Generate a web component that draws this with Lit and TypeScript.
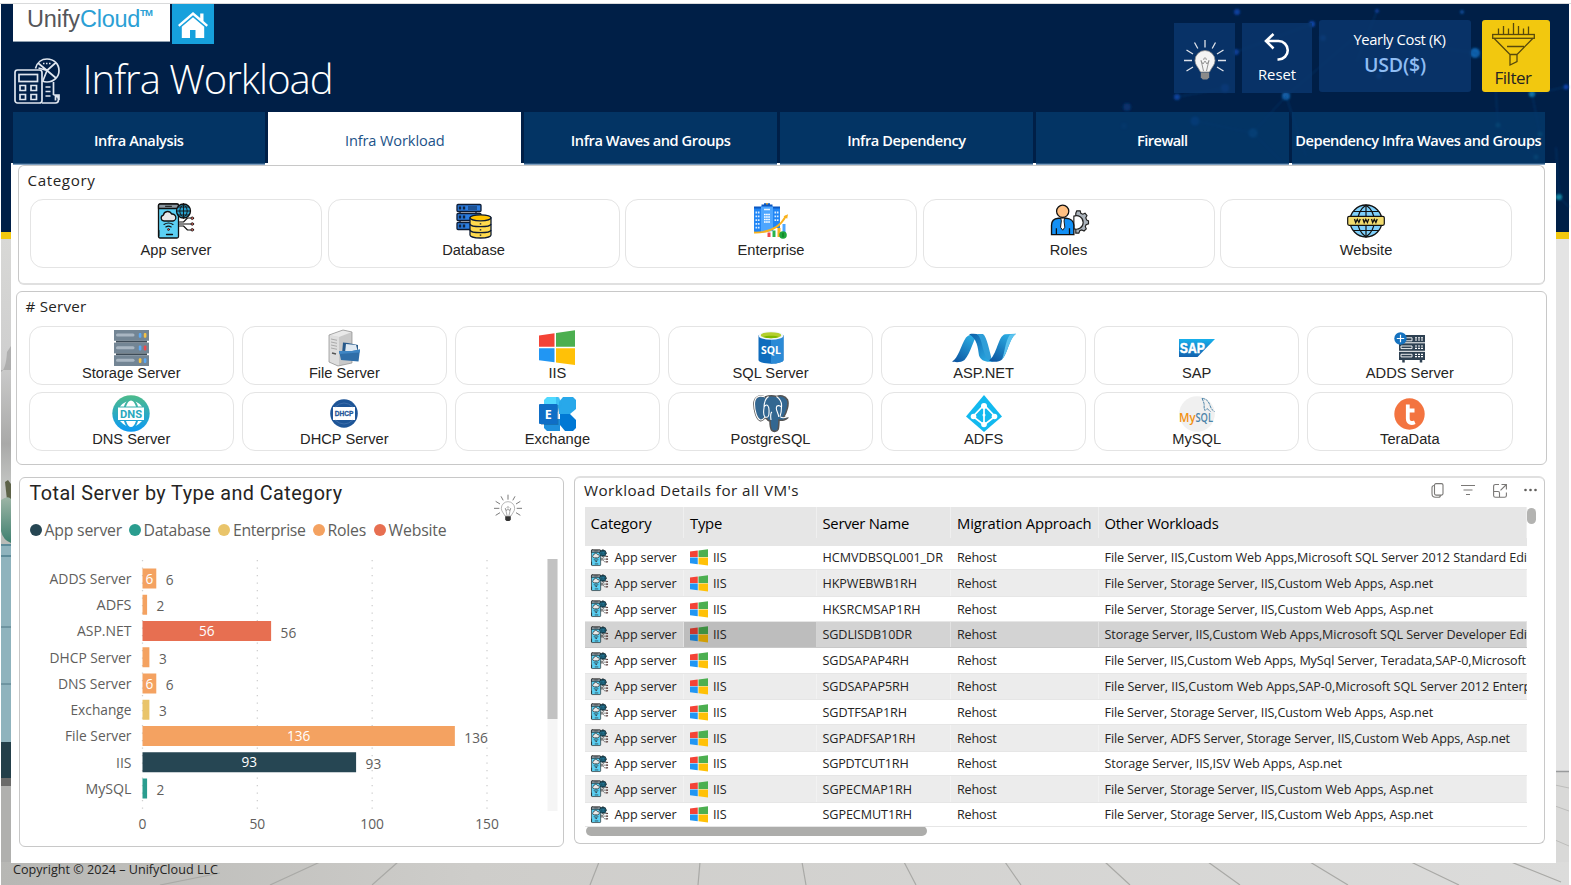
import { LitElement, html, svg, css, nothing } from "lit";
import { customElement, property, query } from "lit/decorators.js";

/* ---------- text run that is tracked to an exact measure ---------- */
@customElement("fit-text")
class FitText extends LitElement {
  @property({ type: Number }) w = 0;
  @property() text = "";
  @query("span") run!: HTMLSpanElement;
  static styles = css`
    :host { display: inline-block; white-space: pre; flex: none; }
  `;
  updated() {
    this.run.style.letterSpacing = "0";
    const natural = this.run.getBoundingClientRect().width;
    this.run.style.letterSpacing = `${(this.w - natural) / this.text.length}px`;
  }
  render() {
    return html`<span>${this.text}</span>`;
  }
}
const fit = (text: string, w: number) => html`<fit-text .text=${text} .w=${w}></fit-text>`;

/* ---------- icons ---------- */
const appServer = svg`
  <g stroke="#111" stroke-width="1.3" stroke-linejoin="round" stroke-linecap="round" fill="none">
    <rect x="1" y="1" width="20" height="34" rx="1.5" fill="#5bd0f3"/>
    <path d="M1 5.5V2.5A1.5 1.5 0 0 1 2.500 1h17A1.500 1.500 0 0 1 21 2.500v3z" fill="#8d9aa3"/>
    <path d="M8 3.300h6" stroke-width="1"/>
    <path d="M9 31.500h6M1.300 27.500v5.500" />
    <path d="M6.500 18a3 3 0 0 1-.6-5.900 4.300 4.300 0 0 1 8.200-1 3.500 3.500 0 1 1 1.400 6.900z" fill="#e8e8e8"/>
    <path d="M6.500 21.500q4.500-3 9 0M8.300 24q2.700-1.800 5.400 0" stroke-width="1.100"/>
    <circle cx="11" cy="26.500" r="1" fill="#f04a3c" stroke-width=".7"/>
    <circle cx="26" cy="8" r="7" fill="#2a9fcb"/>
    <path d="M26 1v14M19 8h14M20.500 4h11M20.500 12h11M26 1c-5 4-5 10 0 14M26 1c5 4 5 10 0 14" stroke-width=".9"/>
    <path d="M22 21h13M22 19h4l4-4h4M22 23h4l4 4h4" stroke-width="1.100"/>
    <circle cx="34.800" cy="15.200" r="1.300" fill="#e06a60" stroke-width=".8"/>
    <circle cx="34.800" cy="21" r="1.300" fill="#e06a60" stroke-width=".8"/>
    <circle cx="34.800" cy="26.800" r="1.300" fill="#e06a60" stroke-width=".8"/>
  </g>`;
const windows = svg`
  <path d="M0 5.500 15.500 3.200V16.800H0z" fill="#f44336"/>
  <path d="M17 3 36 .3V16.800H17z" fill="#4caf50"/>
  <path d="M0 18.200H15.500V32.300L0 30.200z" fill="#2196f3"/>
  <path d="M17 18.200H36V35L17 32.500z" fill="#ffc107"/>`;

const categoryIcons: Record<string, unknown> = {
  "App server": html`<svg width="38" height="36" viewBox="0 0 37 36">${appServer}</svg>`,
  Database: html`<svg width="36" height="36" viewBox="0 0 36 36">
    <g stroke="#0d1b33" stroke-width="1.300">
      <path d="M4 8v3M20 8v3M4 17v3" fill="none"/>
      <rect x="1" y="1.500" width="24" height="7" rx="1" fill="#2b7de0"/>
      <rect x="1" y="10.500" width="24" height="7" rx="1" fill="#2b7de0"/>
      <rect x="1" y="19.500" width="24" height="7" rx="1" fill="#2b7de0"/>
      <path d="M4 3.500v3M8 3.500v3M4 12.500v3M8 12.500v3M4 21.500v3M8 21.500v3" stroke-width="2.400" stroke="#10233f"/>
      <path d="M12 4h9M12 6h9" stroke-width=".9"/>
      <path d="M14 15v17c0 1.700 4.700 3 10.500 3S35 33.700 35 32V15z" fill="#ffdb4d"/>
      <ellipse cx="24.500" cy="14.800" rx="10.500" ry="3" fill="#ffc400"/>
      <path d="M14 21c1 3.600 20 3.600 21 0M14 27c1 3.600 20 3.600 21 0" fill="none"/>
      <path d="M24.500 20.300v1.200M24.500 26.300v1.200M24.500 31.500v1.200" stroke-width="1.500"/>
    </g></svg>`,
  Enterprise: html`<svg width="36" height="36" viewBox="0 0 36 36">
    <path d="M1 5h7v25H1zM20 5h7v20h-7z" fill="#2186f5"/><path d="M1 4.500h7M20 4.500h7" stroke="#0b57c2" stroke-width="2"/>
    <path d="M8 3h12v25l-12 1.500z" fill="#4ea6ff"/><path d="M8.500 2.500h11M11 1.200h6" stroke="#0b57c2" stroke-width="2"/><path d="M14 0v1.500" stroke="#f6b01c" stroke-width="1.500"/>
    <path d="M2.500 9.500h4M2.500 13.300h4M2.500 17.100h4M2.500 20.900h4M2.500 24.700h4M21.500 9.500h4M21.500 13.300h4M21.500 17.100h4" stroke="#d9ecff" stroke-width="1.800" stroke-dasharray="1.600 .8"/>
    <path d="M11 6.500h6" stroke="#e6f3ff" stroke-width="1.500"/>
    <path d="M11 11.500h6M11 14h6M11 16.500h6M11 19h6" stroke="#fff" stroke-width="1.700" stroke-dasharray="1.700 .4"/>
    <path d="M1 29.500C17 30 27 24 33 13" fill="none" stroke="#f9b21d" stroke-width="1.800"/><path d="M30.500 13.200l4.500-2-.8 4.600z" fill="#f9b21d"/>
    <path d="M16 29.500v4.500" stroke="#f0484c" stroke-width="3"/><path d="M21 27.500v6.500" stroke="#29b34a" stroke-width="3"/><path d="M26 25v9" stroke="#f9b21d" stroke-width="3"/><path d="M31 21v9" stroke="#4ea6ff" stroke-width="3"/>
    <circle cx="30" cy="32" r="3.800" fill="#1fa63c"/><path d="M30 29.800v4.400" stroke="#0b6b20"/></svg>`,
  Roles: html`<svg width="38" height="33" viewBox="0 0 38 34">
    <path d="M26 9.500l1-2.500h3.500l.7 2.600 2 .9 2.300-1 2 2.400-1.200 2.300.8 2.200 2 1v3l-2.500.9-.8 2 1 2.300-2.300 2.200-2.400-1.100-2 .8-1 2.500H26z" fill="#aab2ba" stroke="#222" stroke-width="1.200"/>
    <path d="M24 12.500a7 7 0 1 1 0 13z" fill="#fff" stroke="#222" stroke-width="1.200"/>
    <path d="M1 31.500V22c0-4.500 3-7 7-7.300h8c4.500.3 8 3 8 7.300v9.500z" fill="#1390f5" stroke="#111" stroke-width="1.400"/>
    <path d="M6 31.500V25M19.500 31.500V25" stroke="#111" stroke-width="1.300"/>
    <path d="M10.500 14.500h4l-.6 3 .8 6.500-2.200 3-2.200-3 .8-6.500z" fill="#fff" stroke="#111" stroke-width="1"/>
    <circle cx="12.500" cy="7.500" r="6.300" fill="#ffc083" stroke="#111" stroke-width="1.300"/></svg>`,
  Website: html`<svg width="38" height="34" viewBox="0 0 38 34">
    <circle cx="19" cy="17" r="16" fill="#7fd0fb" stroke="#111" stroke-width="1.300"/>
    <path d="M19 1v32M6 7.500h26M6 26.500h26M19 1C8 9 8 25 19 33M19 1c11 8 11 24 0 32" fill="none" stroke="#111" stroke-width="1.200"/>
    <rect x=".7" y="12.300" width="36.600" height="9" rx="1.500" fill="#f2dc6f" stroke="#111" stroke-width="1.200"/>
    <path d="M7.500 15l1.200 3.500 1.600-3 1.600 3 1.300-3.500M16 15l1.200 3.500 1.600-3 1.600 3 1.300-3.500M24.500 15l1.200 3.500 1.600-3 1.600 3 1.300-3.500" fill="none" stroke="#111" stroke-width="1.300"/></svg>`,
};

const rack = [0, 1, 2].map(
  (i) => svg`<g transform="translate(0 ${i * 12.600})">
    <rect width="35" height="10.800" fill="#738594"/>${i < 2 ? svg`<rect x="2" y="10.800" width="31" height="1.800" fill="#3d4b57"/>` : nothing}
    <rect x="2" y="3.600" width="18.500" height="3" rx="1.500" fill="#a9b6c2"/>
    <rect x="24.800" y="3" width="2.600" height="4.800" rx="1" fill="${i === 2 ? "#f5c344" : "#5ba9f5"}"/>
    <rect x="29.800" y="3" width="2.600" height="4.800" rx="1" fill="${["#f5c344", "#f0484c", "#5ba9f5"][i]}"/></g>`
);
const serverIcons: Record<string, unknown> = {
  "Storage Server": html`<svg width="35" height="36" viewBox="0 0 35 36">${rack}</svg>`,
  "File Server": html`<svg width="33" height="36" viewBox="0 0 33 36">
    <path d="M1 5 15 0l9 2v31L10 36 1 32z" fill="#c9c9c9"/><path d="M1 5l10 2v29L1 32z" fill="#dedede"/><path d="M1 5 15 0l9 2-13 5z" fill="#e9e9e9"/>
    <path d="M1 5 15 0l9 2v31L10 36 1 32z" fill="none" stroke="#8b8b8b" stroke-width=".7"/>
    <path d="M3 9l6 1.300M3 12l6 1.300M3 15l6 1.300M3 18l6 1.300" stroke="#aaa"/><path d="M4 23l4 1" stroke="#555" stroke-width="1.500"/>
    <path d="M15 12.500l5 .5 10 2v9H14z" fill="#27598a"/><path d="M18 14l10 1 2 7-13 1z" fill="#dfe9f2"/>
    <path d="M11 21h13l8-1.500-1.500 12L13 30z" fill="#2f6ea8"/><path d="M11 21h13l8-1.500-.4 3L11.500 24z" fill="#3f86c4"/></svg>`,
  IIS: html`<svg width="36" height="36" viewBox="0 0 36 36">${windows}</svg>`,
  "SQL Server": html`<svg width="26" height="33" viewBox="0 0 26 33">
    <path d="M.5 4v25c0 2 5.600 3.700 12.500 3.700S25.500 31 25.500 29V4z" fill="#0f6cbd"/><path d="M13 4h12.500v25c0 2-5.600 3.700-12.500 3.700z" fill="#2b8ad6"/>
    <ellipse cx="13" cy="4.500" rx="12.500" ry="4.300" fill="#f2f7fb"/><ellipse cx="13" cy="4.200" rx="10.300" ry="3" fill="#b4cf2d"/><path d="M5 6c3-1.800 13-1.800 16 0-4 1.600-12 1.600-16 0z" fill="#7fb900"/>
    <text x="13" y="22.800" text-anchor="middle" textLength="20" lengthAdjust="spacingAndGlyphs" font-family="Open Sans" font-weight="700" font-size="10.500" fill="#fff">SQL</text></svg>`,
  "ASP.NET": html`<svg width="64" height="30" viewBox="0 0 64 30">
    <defs><linearGradient id="n1" x1="0" y1="1" x2=".6" y2="0"><stop offset="0" stop-color="#0a4f9c"/><stop offset="1" stop-color="#29a9e0"/></linearGradient>
    <linearGradient id="n2" x1="0" y1="0" x2="1" y2="1"><stop offset="0" stop-color="#0b5ea8"/><stop offset="1" stop-color="#2fb4ea"/></linearGradient></defs>
    <path d="M0 28.500C6 26 9 12 14 4.500 17 .8 22 .8 25 2.500 21 7 19 20 12.500 27 9 29.800 3 29.300 0 28.500z" fill="url(#n1)"/>
    <path d="M17 1.200C24 0 29 1.500 31 6c3.500 8 6 17 10 22.500-8 1-12-1-14-6C26 15 25 5 17 1.200z" fill="url(#n2)"/>
    <path d="M25 1h6c4 3 6 16 9.500 27.500l-4-1C30 21 31 6 25 1z" fill="#2f9ed8"/>
    <path d="M37 27.500C45 22 46 3 53 1.200L64 .8C57 6 56 20 50 26.500c-2.500 2.500-9 3.300-13 1z" fill="url(#n1)"/>
    <path d="M58 1.500l6-.7C57 6 56 20 50 26.500c3-8 3-18 8-25z" fill="#5cc3ee"/></svg>`,
  SAP: html`<svg width="36" height="18" viewBox="0 0 36 18">
    <defs><linearGradient id="sap" x2="0" y2="1"><stop offset="0" stop-color="#17b0ec"/><stop offset="1" stop-color="#1361ae"/></linearGradient></defs>
    <path d="M0 0h36L18.500 18H0z" fill="url(#sap)"/>
    <text x=".8" y="14" textLength="25" lengthAdjust="spacingAndGlyphs" font-family="Liberation Sans" font-weight="700" font-size="14.500" fill="#fff" stroke="#fff" stroke-width=".5">SAP</text></svg>`,
  "ADDS Server": html`<svg width="32" height="31" viewBox="0 0 32 31">
    <path d="M5 3h26v25H5z" fill="#2e4152"/><path d="M5 10.800h26M5 19.300h26" stroke="#fff" stroke-width="1"/>
    <path d="M7 5.800h11v3H7zM7 14h11v2.600H7zM7 22.300h11v2.600H7z" fill="none" stroke="#fff" stroke-width=".9"/>
    <path d="M21 5.800h8M21 8h8M21 14h8M21 16.300h8M21 22.300h8M21 24.600h8" stroke="#fff" stroke-width="1.200" stroke-dasharray="2 1"/>
    <path d="M9.500 28v2.500M27 28v2.500" stroke="#2e4152" stroke-width="2.500"/>
    <circle cx="6.500" cy="6.500" r="6.200" fill="#1572bf"/><path d="M6.500 2.800v7.400M2.800 6.500h7.400" stroke="#fff" stroke-width="1.200"/></svg>`,
  "DNS Server": html`<svg width="38" height="37" viewBox="0 0 38 37">
    <defs><linearGradient id="dns" x2="0" y2="1"><stop offset="0" stop-color="#4dbb8a"/><stop offset="1" stop-color="#0c9af5"/></linearGradient></defs>
    <ellipse cx="19" cy="18.500" rx="18.700" ry="18.300" fill="url(#dns)"/>
    <g fill="#fff"><path d="M14 11.500q2-6 5-6t5 6zM8 11.500q3-3.500 6.500-5-2 2.500-2.500 5zM30 11.500q-3-3.500-6.500-5 2 2.500 2.500 5z"/>
    <path d="M14 26q2 6 5 6t5-6zM8 26q3 3.500 6.500 5-2-2.500-2.500-5zM30 26q-3 3.500-6.500 5 2-2.500 2.500-5z"/><rect x="6" y="12.500" width="26" height="12.500"/></g>
    <text x="19" y="22.700" text-anchor="middle" textLength="22" lengthAdjust="spacingAndGlyphs" font-family="Roboto" font-weight="700" font-size="11" fill="#2aa8bd">DNS</text></svg>`,
  "DHCP Server": html`<svg width="28" height="29" viewBox="0 0 28 29">
    <ellipse cx="14" cy="14.500" rx="13.800" ry="14.200" fill="#1e5597"/><path d="M3 8h22v13H3z" fill="#fff"/><path d="M5 8q9-8 18 0M5 21q9 8 18 0" fill="none" stroke="#4a79b2" stroke-width=".7"/>
    <text x="14" y="17.200" text-anchor="middle" textLength="18.500" lengthAdjust="spacingAndGlyphs" font-family="Liberation Sans" font-weight="700" font-size="7" fill="#1e5597" stroke="#1e5597" stroke-width=".3">DHCP</text></svg>`,
  Exchange: html`<svg width="37" height="34" viewBox="0 0 37 34">
    <path d="M8 0h11l4 6-5 8H5V3z" fill="#50d9ff"/><path d="M24 0h10l3 3v9l-6 5H20V5z" fill="#28a8ea"/><path d="M20 0l3 6-4 9h-2V0z" fill="#28a8ea" opacity=".5"/>
    <path d="M5 22h16v12H8l-3-3z" fill="#1e8fdc"/><path d="M21 17h10l6 6v8l-3 3h-8l-5-6z" fill="#0078d4"/>
    <path d="M2 8h17.500v20H2z" fill="#0a3d6e" opacity=".35"/><rect y="7" width="18.500" height="20" rx="1" fill="#0f6ec6"/>
    <text x="9.300" y="21.500" text-anchor="middle" font-family="Open Sans" font-weight="700" font-size="12.500" fill="#fff">E</text></svg>`,
  PostgreSQL: html`<svg width="36" height="37" viewBox="0 0 36 37">
    <path d="M12 2C5-.5 1 3 1 9c0 7 2.500 15 6 16.500 2 .8 3.500-1 5-3l2 1.500c1 2 1.500 2 3 1.800 0 3 .3 8 2 9.700 1.500 1.500 5 1 6-1 .8-2 .8-6 1-9.500 3 .8 7-.3 8.500-2-1.500-.5-3-.3-4-.8C34 17 36 9 34.500 5 32 .5 27 0 23.500 1.500 19 0 15 .8 12 2z" fill="#336791" stroke="#555" stroke-width="1.600"/>
    <path d="M12 2C5-.5 1.500 3 1.500 9c0 7 2.500 15 6 16 2 .5 3-1 4.500-3M12 22c-2-2-1.500-6-1-9 0-5 .5-9 4.500-11.500M12 22c3 1 4-1 4-4s.5-5-1-7-3-.5-4 1M23.500 1.500C27 4 29 8 28.500 12c0 4-.5 7-1.500 9.500M18 25c-.5-4-1-7 1-8M28.300 12c-1.500-2-5-2-5 1s2 5 2.500 9M27.500 22c2.500 1.500 5 .5 7-.3" fill="none" stroke="#fff" stroke-width="1.100"/></svg>`,
  ADFS: html`<svg width="36" height="37" viewBox="0 0 36 37">
    <path d="M18 0 36 21.500 18 37 0 21.500z" fill="#12b9ef"/><path d="M18 10 7 21.500 18 30l11-8.500zM18 10v20" fill="none" stroke="#fff" stroke-width="1.700"/>
    <g fill="#fff"><circle cx="18" cy="11" r="3"/><circle cx="7.500" cy="21.500" r="2.800"/><circle cx="28.500" cy="21.500" r="2.800"/><circle cx="18" cy="29.500" r="2.800"/><circle cx="18" cy="20" r="1.500"/></g></svg>`,
  MySQL: html`<svg width="36" height="36" viewBox="0 0 36 36"><circle cx="18" cy="18" r="17.800" fill="#f0f0f0"/>
    <path d="M23 2.500c4 0 7 3 8 7 1 2 1 4 4.500 6M23 2.500c1 2 1.500 3 2 5s-.5 5 1 7l2-2 3.500 3" fill="none" stroke="#4c84a8" stroke-width="1" stroke-dasharray="3 .7"/>
    <text x="0" y="26" font-family="Open Sans" font-size="12" font-weight="600" fill="#f29111" textLength="16.500" lengthAdjust="spacingAndGlyphs">My</text>
    <text x="16.500" y="26" font-family="Open Sans" font-size="12" font-weight="600" fill="#4c84a8" textLength="17.500" lengthAdjust="spacingAndGlyphs">SQL</text></svg>`,
  TeraData: html`<svg width="31" height="32" viewBox="0 0 31 32"><ellipse cx="15.500" cy="16" rx="15.200" ry="15.700" fill="#f37440"/>
    <path d="M13.800 6.500v14c0 4 3 5.500 7 3.800M13.800 12.500h6.700" fill="none" stroke="#fff" stroke-width="3.800"/></svg>`,
};
const bulb = (w: number, h: number, ray: string, glass: string, line: string, base: string) => html`<svg width=${w} height=${h} viewBox="0 0 42 40">
  <path d="M21 0v7.500M10.500 2.500l3.300 6M31.500 2.500l-3.300 6M2.500 10l6.500 4M39.500 10l-6.500 4M0 20.500h8M42 20.500h-8M2.500 31l6.500-4M39.500 31l-6.500-4" stroke=${ray} stroke-width="1.300"/>
  <path d="M21 10.500a10 10 0 0 0-10 10c0 4.500 3.500 7 5.500 11.500h9c2-4.500 5.500-7 5.500-11.500a10 10 0 0 0-10-10z" fill=${glass} stroke=${line} stroke-width=".8"/>
  <path d="M17 20l2.500 11M25 20l-2.500 11M17 21l2 3 2-3 2 3 2-3M20 20a1.300 1.300 0 1 1 2 0" fill="none" stroke=${line} stroke-width=".9"/>
  <path d="M16.800 32.500h8.400v5l-2 2h-4.400l-2-2z" fill=${base}/></svg>`;

/* ---------- data ---------- */
const tabs: [string, number][] = [
  ["Infra Analysis", 89.500], ["Infra Workload", 99.500], ["Infra Waves and Groups", 159.500],
  ["Infra Dependency", 118.500], ["Firewall", 50.500], ["Dependency Infra Waves and Groups", 246],
];
const legend: [string, string, number, number][] = [
  ["App server", "#264653", 77.500, 99], ["Database", "#2a9d8f", 67, 89.500], ["Enterprise", "#e9c46a", 72.500, 94.500],
  ["Roles", "#f4a261", 38.500, 61], ["Website", "#e76f51", 58, 76],
];
const bars: [string, number, string, number][] = [
  ["ADDS Server", 6, "#f4a261", 82], ["ADFS", 2, "#f4a261", 35], ["ASP.NET", 56, "#e76f51", 54.500],
  ["DHCP Server", 3, "#f4a261", 82], ["DNS Server", 6, "#f4a261", 73.500], ["Exchange", 3, "#e9c46a", 61],
  ["File Server", 136, "#f4a261", 66.500], ["IIS", 93, "#264653", 15.500], ["MySQL", 2, "#2a9d8f", 46],
];
const plain = "File Server, Storage Server, IIS,Custom Web Apps, Asp.net";
/* server, name width, row height, workloads, workloads width */
const rows: [string, number, number, string, number][] = [
  ["HCMVDBSQL001_DR", 120.500, 24, "File Server, IIS,Custom Web Apps,Microsoft SQL Server 2012 Standard Edition", 445],
  ["HKPWEBWB1RH", 94.500, 27, plain, 328.500],
  ["HKSRCMSAP1RH", 98, 25, plain, 328.500],
  ["SGDLISDB10DR", 89.500, 26, "Storage Server, IIS,Custom Web Apps,Microsoft SQL Server Developer Edition", 445],
  ["SGDSAPAP4RH", 86.500, 26, "File Server, IIS,Custom Web Apps, MySql Server, Teradata,SAP-0,Microsoft", 421.500],
  ["SGDSAPAP5RH", 86.500, 26, "File Server, IIS,Custom Web Apps,SAP-0,Microsoft SQL Server 2012 Enterprise", 448],
  ["SGDTFSAP1RH", 84.500, 25, plain, 328.500],
  ["SGPADFSAP1RH", 93, 27, "File Server, ADFS Server, Storage Server, IIS,Custom Web Apps, Asp.net", 405.500],
  ["SGPDTCUT1RH", 86, 24, "Storage Server, IIS,ISV Web Apps, Asp.net", 237.500],
  ["SGPECMAP1RH", 89.500, 27, plain, 328.500],
  ["SGPECMUT1RH", 89.500, 24, plain, 328.500],
];
const selectedRow = 3;

const nodes: [number, number, number, string][] = [
  [1237, 12, 3, "#0b3f9e"], [1312, 24, 3, "#0d46a8"], [1236, 52, 3, "#0a3c96"], [1225, 88, 4, "#0b3f9e"], [1286, 96, 4, "#1360a8"],
  [1177, 97, 3, "#0c429e"], [1253, 133, 4.500, "#1263b0"], [1195, 121, 4.500, "#0b4ab0"], [1127, 107, 4, "#07306c"], [1475, 53, 5, "#0f62ad"],
  [1532, 94, 3, "#1680b0"], [1498, 125, 2.500, "#18869c"], [1540, 134, 2.500, "#18869c"], [1536, 157, 2.500, "#17789a"], [1566, 87, 2.500, "#1142b0"],
  [1559, 197, 3, "#1590a8"], [1377, 11, 2, "#0c3f9a"], [1462, 12, 2, "#0c4d9a"], [1379, 76, 3, "#0b4590"], [1323, 38, 3, "#0b4590"], [1124, 126, 3, "#07306c"],
];

/* ---------- backdrop photo panels ---------- */
const backdrop = html`<svg class="backdrop" width="1571" height="885" viewBox="0 0 1571 885">
  <defs>
    <linearGradient id="wall" x2="0" y2="1"><stop offset="0" stop-color="#d8d8d6"/><stop offset=".38" stop-color="#cfcfcf"/><stop offset=".66" stop-color="#a9a9a8"/><stop offset=".8" stop-color="#c4c6c4"/><stop offset="1" stop-color="#b8bbb7"/></linearGradient>
    <linearGradient id="plant" x2="0" y2="1"><stop offset="0" stop-color="#9db5a6"/><stop offset="1" stop-color="#3f806f"/></linearGradient>
    <linearGradient id="floor" x2="1" y2="0"><stop offset="0" stop-color="#b7b7b4"/><stop offset=".3" stop-color="#cecdca"/><stop offset="1" stop-color="#dcdcdb"/></linearGradient>
    <filter id="soft"><feGaussianBlur stdDeviation="1"/></filter>
  </defs>
  <path d="M0 3.500h1571" stroke="#d9dadb" stroke-width="1"/>
  <rect x="1" y="4" width="1568" height="228" fill="#001f47"/>
  <g filter="url(#soft)">
    ${nodes.map(([x, y, r, c]) => svg`<circle cx=${x} cy=${y} r=${r} fill=${c}/>`)}
    <path d="M1286 96 1253 133 1195 121M1286 96l70-60 120 17M1312 24l-76 28M1475 53l57 41 34-7M1498 125l-4-60M1540 134l-8-40M1498 125l38 32M1253 133l30 30M1286 96l20 60M1559 197l10 10M1559 197l-3-50M1377 11l-20 50M1177 97l48-9" fill="none" stroke="#0b4486" stroke-width="1" opacity=".6"/>
  </g>
  <rect x="1" y="239" width="12" height="310" fill="url(#wall)"/>
  <path d="M1 372q5-3 6-20l4-6v24H1z" fill="#999" opacity=".6"/>
  <path d="M5 482l3-2 3 4v16H7z" fill="#5d6248"/>
  <path d="M1 500q7-5 10-1v44q-8-3-10-12z" fill="url(#plant)"/>
  <rect x="1" y="545" width="12" height="197" fill="#8fb3bd"/><path d="M1 545h12M1 556h12" stroke="#5d8b99" stroke-width="2"/><path d="M1 627h12M1 684h12" stroke="#4f7684"/>
  <rect x="1" y="742" width="12" height="36" fill="#233f49"/>
  <rect x="1" y="778" width="12" height="107" fill="#b0b0ae"/><path d="M1 778h10v8H1z" fill="#6b6b6a"/>
  <rect x="1555" y="239" width="14" height="532" fill="#e4e4e4"/><rect x="1555" y="771" width="14" height="114" fill="#d9d9d8"/>
  <path d="M1555 771.500h14" stroke="#999b9c" stroke-width="1.500"/>
  <path d="M1555 806l14 5M1555 840l14 6M1555 785l14 3" stroke="#bdbdbb"/>
  <rect x="1" y="232" width="1568" height="7" fill="#f2c80f"/>
  <rect x="1" y="862" width="1568" height="23" fill="url(#floor)"/>
  <path d="M372 885l26-23M599 862l-9 23M700 862l-2 23M802 862l4 23M904 862l12 23M1005 862l16 23M1105 862l25 23M1208 862l32 23M1310 862l38 23M1411 862l48 23M1511 862l50 20M270 885l50-23M160 885l60-12" stroke="#a9a9a6" stroke-width="1.200" fill="none"/>
</svg>`;

@customElement("app-root")
class AppRoot extends LitElement {
  static styles = css`
    :host { display: grid; width: 1571px; height: 885px; overflow: hidden; background: #fff; font-family: "Open Sans", "Noto Sans", sans-serif; color: #252423; }
    * { box-sizing: border-box; }
    svg { display: block; flex: none; overflow: visible; }
    .backdrop, .page { grid-area: 1 / 1; }
    .page { display: flex; flex-direction: column; padding-top: 4px; min-width: 0; z-index: 1; }
    header { height: 108px; display: flex; justify-content: space-between; padding: 0 21px 0 12.500px; }
    .brand { display: flex; gap: 2.500px; height: 40px; }
    .logo { width: 157px; height: 38px; background: #fff; border-bottom: 1px solid #8fa0b0; padding: 2px 0 0 14.500px; display: flex; font: 23.500px/26px "Liberation Sans", sans-serif; color: #55565a; }
    .logo .blue { color: #2ba0d5; }
    .logo .tm { font-size: 9.500px; line-height: 14px; color: #2ba0d5; font-weight: 700; }
    .home { width: 42px; height: 40px; background: #16a0dc; display: grid; place-items: center; padding-top: 2px; }
    .headline { display: flex; align-items: center; gap: 23px; margin-top: 13.500px; padding-left: 1px; height: 46px; }
    .headline h1 { margin: 0; font-size: 40px; line-height: 46px; font-weight: 300; color: #fff; margin-top: -3px; }
    .tools { display: flex; align-items: flex-start; padding-top: 16px; color: #fff; }
    .tool { display: flex; flex-direction: column; align-items: center; background: rgba(10, 55, 110, .82); }
    .t-bulb { width: 61px; height: 70px; margin: 3px 7px 0 0; padding-top: 17px; }
    .t-reset { width: 70px; height: 70px; margin: 3px 7px 0 0; padding-top: 10px; font-size: 14.800px; line-height: 20px; gap: 3px; }
    .t-cost { width: 152px; height: 72px; margin-right: 11px; border-radius: 3px; padding: 9px 0 0 9px; font-size: 14.800px; line-height: 20px; gap: 4px; }
    .t-cost .usd { color: #8fbdf3; font-size: 19.500px; line-height: 24px; font-weight: 600; padding-right: 9px; }
    .t-filter { width: 68px; height: 72px; border-radius: 3px; background: #f2c80f; color: #252423; padding: 3px 6px 0 0; font-size: 17px; line-height: 22px; gap: 1px; }
    .tabs { display: flex; gap: 3.300px; height: 53px; margin: 0 15px 0 11px; padding-left: 1.500px; background: linear-gradient(transparent 51.500px, #fff 51.500px); flex: none; }
    .tab { width: 252.600px; flex: none; display: grid; place-items: center; padding-top: 4px; background: rgba(4, 56, 106, .84); border-bottom: 1.500px solid #7d9ebf; color: #fff; font-weight: 600; font-size: 14.600px; }
    .tab.on { background: #fff; border-color: #fff; color: #1c5288; font-weight: 400; }
    main { height: 698px; margin: 0 15px 0 11px; background: #fff; display: flex; flex-direction: column; flex: none; }
    .card { border: 1px solid #c8c8c8; border-radius: 6px; background: #fff; }
    .card h2 { margin: 0; font-weight: 400; font-size: 15.200px; line-height: 22px; }
    .cats { margin: 0 11px 0 7px; height: 120px; border-bottom: 2px solid #e0e0e0; padding: 3px 0 0 8.500px; }
    .cats .tiles { display: flex; gap: 5.500px; margin: 8px 0 0 2.500px; }
    .cat { width: 292px; height: 68.500px; padding-top: 2.500px; }
    .tile { border: 1px solid #e4e4e4; border-radius: 13px; display: flex; flex-direction: column; align-items: center; font: 14.670px/18px "Liberation Sans", Arial, sans-serif; color: #252423; flex: none; }
    .ic { height: 37px; display: grid; place-items: center; flex: none; }
    .cat .ic { height: 36px; margin-bottom: 2.500px; }
    .servers { margin: 6px 9px 0 5px; height: 174px; padding: 3px 0 0 8.500px; }
    .servers .tiles { display: grid; grid-template-columns: repeat(7, 205.500px); column-gap: 7.600px; row-gap: 7.500px; margin: 9px 0 0 3px; }
    .srv { height: 58.800px; padding-top: 2px; }
    .srv .ic { margin-bottom: -2.500px; }
    .bottom { display: flex; align-items: flex-start; margin: 11px 11px 0 8px; gap: 10.500px; }
    .chart { width: 544.500px; height: 370px; margin-top: 1px; padding: 5px 0 0 9.500px; }
    .chart-head { display: flex; justify-content: space-between; padding-right: 41px; height: 37px; }
    .card .chart-head h2 { font-family: Roboto, sans-serif; font-size: 19.800px; line-height: 22px; }
    .chart-head svg { margin-top: 10.500px; }
    .legend { display: flex; font-size: 15.800px; line-height: 20px; color: #605e5c; }
    .legend div { display: flex; align-items: center; gap: 3px; flex: none; }
    .dot { width: 12px; height: 12px; border-radius: 50%; flex: none; }
    .plot { margin: 6px 0 0 -9.500px; }
    .plot text { font: 15px "Open Sans", sans-serif; fill: #605e5c; }
    .plot .in { fill: #fff; }
    .table { width: 971px; height: 367.500px; padding: 3px 0 0 9px; border-top: 2px solid #e0e0e0; }
    .table-head { display: flex; justify-content: space-between; height: 26px; padding-right: 7px; }
    .table-head h2 { margin-top: -2px; }
    .table-head .acts { display: flex; gap: 17.500px; padding-top: 2px; }
    .grid-wrap { display: flex; padding-left: .5px; gap: .5px; }
    .grid { width: 942px; overflow: hidden; height: 320px; flex: none; }
    .row { display: grid; grid-template-columns: 99.500px 132.500px 134.500px 147.500px 1fr; font-size: 12.600px; overflow: hidden; border-bottom: 1px solid #e6e6e6; }
    .row > div { display: flex; align-items: center; padding-left: 6px; border-right: 1px solid rgba(255, 255, 255, .35); white-space: nowrap; min-width: 0; gap: 5px; color: #252423; }
    .row .c0 { gap: 7px; }
    .row.head { height: 39px; background: #e6e6e6; font-size: 14.800px; font-weight: 500; padding-bottom: 7px; }
    .row.head > div { color: #000; }
    .row.odd { background: #ececec; }
    .row.sel { background: #d3d3d3; border-color: #c8c8c8; }
    .row.sel .c1 { background: #bdbdbd; }
    .row.sel .c1 svg { filter: brightness(.82); }
    .vthumb { width: 8.500px; height: 15.500px; border-radius: 4.500px; background: #b3b3b1; margin-top: 1px; }
    .hthumb { width: 341px; height: 10px; border-radius: 5px; background: #adadab; margin: -1px 0 0 2px; }
    footer { font-size: 12.600px; line-height: 16px; margin-top: -1px; padding-left: 13px; color: #252423; }
  `;

  private plot() {
    const x0 = 143, unit = 2.2967;
    return html`<svg class="plot" width="543" height="299" viewBox="20.500 546 543 299">
      ${[0, 50, 100, 150].map((v) => svg`
        <path d="M${x0 + v * unit} 560V811" stroke="#cfcfcf" stroke-width="1.300" stroke-dasharray="1.300 6.200"/>
        <text x=${x0 + v * unit} y="828.500" text-anchor="middle" textLength=${String(v).length * 7.900} lengthAdjust="spacingAndGlyphs">${v}</text>`)}
      ${bars.map(([name, v, c, w], i) => {
        const y = 578.500 + i * 26.250, n = String(v), tw = n.length * 7.800;
        return svg`<text x="132" y=${y + 5.300} text-anchor="end" textLength=${w} lengthAdjust="spacingAndGlyphs">${name}</text>
          <rect x=${x0} y=${y - 10} width=${v * unit} height="20" fill=${c}/>
          ${v > 5 ? svg`<text class="in" x=${x0 + (v * unit) / 2} y=${y + 5} text-anchor="middle" textLength=${tw} lengthAdjust="spacingAndGlyphs">${n}</text>` : nothing}
          <text x=${x0 + v * unit + 9.500} y=${y + 6.500} textLength=${tw} lengthAdjust="spacingAndGlyphs">${n}</text>`;
      })}
      <rect x="548" y="559" width="10" height="252" fill="#f5f5f5"/><rect x="548" y="559" width="10" height="160" fill="#c2c2c2"/>
    </svg>`;
  }

  render() {
    return html`${backdrop}
    <div class="page">
      <header>
        <div>
          <div class="brand">
            <div class="logo">${fit("Unify", 53)}<span class="blue">${fit("Cloud", 60)}</span><span class="tm">${fit("TM", 12)}</span></div>
            <div class="home"><svg width="30" height="28" viewBox="0 0 30 28" fill="#fff"><path d="M15 1 0 14l1.500 1.800L15 4.200l13.500 11.600L30 14l-4.500-4V2.500h-3.300v4.600z"/><path d="M15 6.200 3.800 15.800V27H12v-8h5.500v8h8.700V15.800z"/></svg></div>
          </div>
          <div class="headline">
            <svg width="46" height="46" viewBox="0 0 46 46" fill="none" stroke="#dfe6ef" stroke-width="1.700">
              <rect x="1" y="12" width="27" height="33" rx="2.500"/><rect x="5" y="16.500" width="18.500" height="7"/>
              <path d="M6 27.500h5.500v5H6zM17 27.500h5.500v5H17zM6 36.500h5.500v5H6zM17 36.500h5.500v5H17z"/>
              <path d="M21.500 10.500C23 4 28 1 33 1c7 0 12 5 12 11.500S40 24 33 24c-2 0-3.500-.5-5-1.300M33 12.500 24 5M33 12.500 42 4.500M33 12.500 24.500 10M33 12.500l9.500 8M33 12.500l-4 10"/>
              <path d="M39.500 24v13M28 45h13.500c4 0 4-7 0-7v4.500M39.500 37h5.500v5M31.500 29h5M31.500 33.500h5M31.500 38h5"/><path d="M29 5.500h8" stroke-dasharray="1.500 1.500"/>
            </svg>
            <h1>${fit("Infra Workload", 250)}</h1>
          </div>
        </div>
        <div class="tools">
          <div class="tool t-bulb">${bulb(42, 40, "#dfe3ea", "#f4f4f4", "#8b8b8b", "#8a8a8a")}</div>
          <div class="tool t-reset"><svg width="26" height="28" viewBox="0 0 26 28" fill="none" stroke="#fff" stroke-width="2.600"><path d="M9.500 1 2 8l7.500 7.500M2 8h12.500a9 9 0 0 1 0 18.500H13.500"/></svg>${fit("Reset", 38)}</div>
          <div class="tool t-cost">${fit("Yearly Cost (K)", 92)}<div class="usd">${fit("USD($)", 62)}</div></div>
          <div class="tool t-filter"><svg width="43" height="43" viewBox="0 0 43 43" fill="none" stroke="#57490c" stroke-width="1.300"><path d="M6.500 5.500V11M11.500 3v8M16.500 5.500V11M21.500 0v11M26.500 3v8M31.500 5.500V11M36.500 3.500V11"/><rect x=".7" y="11.500" width="41.600" height="3.800"/><path d="M2 15.300 18 31.500V42l7-3.500v-7L41 15.300M15 23.500h17M18 31.500h7"/></svg>${fit("Filter", 37)}</div>
        </div>
      </header>
      <nav class="tabs">${tabs.map(([t, w], i) => html`<div class="tab ${i === 1 ? "on" : ""}">${fit(t, w)}</div>`)}</nav>
      <main>
        <section class="card cats"><h2>${fit("Category", 68)}</h2>
          <div class="tiles">${Object.entries(categoryIcons).map(([n, ic]) => html`<div class="tile cat"><div class="ic">${ic}</div>${n}</div>`)}</div></section>
        <section class="card servers"><h2>${fit("# Server", 61)}</h2>
          <div class="tiles">${Object.entries(serverIcons).map(([n, ic]) => html`<div class="tile srv"><div class="ic">${ic}</div>${n}</div>`)}</div></section>
        <div class="bottom">
          <section class="card chart">
            <div class="chart-head"><h2>${fit("Total Server by Type and Category", 313)}</h2>${bulb(28, 28, "#666", "#fff", "#777", "#333")}</div>
            <div class="legend">${legend.map(([t, c, w, pitch]) => html`<div style="width:${pitch}px"><span class="dot" style="background:${c}"></span>${fit(t, w)}</div>`)}</div>
            ${this.plot()}
          </section>
          <section class="card table">
            <div class="table-head"><h2>${fit("Workload Details for all VM's", 215)}</h2>
              <div class="acts">
                <svg width="13" height="15" viewBox="0 0 13 15" fill="none" stroke="#7a7876" stroke-width="1.100"><rect x="3.500" y=".6" width="8.500" height="11.500" rx="1.500"/><path d="M3.500 2.500C1.500 2.500 1 3.500 1 4.500v6c0 2.500 1.500 3.800 3.500 3.800h3c1.500 0 2-.8 2-2"/></svg>
                <svg width="14" height="14" viewBox="0 0 14 14" stroke="#7a7876" stroke-width="1.200"><path d="M0 2.500h14M2.500 7h9M5 11.500h4"/></svg>
                <svg width="14" height="15" viewBox="0 0 14 15" fill="none" stroke="#7a7876" stroke-width="1.100"><path d="M6 1.500H2.500C1.300 1.500.6 2.200.6 3.400v9c0 1.200.7 1.900 1.900 1.900h9c1.200 0 1.900-.7 1.900-1.900V9.500M.6 8.500h4.500c.8 0 1.400.5 1.400 1.400v4.400M8.500 1.500h4.900v5M13.400 1.500 7.500 7.400"/></svg>
                <svg width="13" height="14" viewBox="0 0 13 14" fill="#605e5c"><circle cx="1.500" cy="7" r="1.300"/><circle cx="6.500" cy="7" r="1.300"/><circle cx="11.500" cy="7" r="1.300"/></svg>
              </div></div>
            <div class="grid-wrap">
              <div class="grid">
                <div class="row head"><div>${fit("Category", 61)}</div><div>${fit("Type", 32)}</div><div>${fit("Server Name", 86.500)}</div><div>${fit("Migration Approach", 134.500)}</div><div>${fit("Other Workloads", 114)}</div></div>
                ${rows.map(([n, nw, h, o, ow], i) => html`<div class="row ${i === selectedRow ? "sel" : i % 2 ? "odd" : ""}" style="height:${h}px">
                  <div class="c0"><svg width="17" height="17.500" viewBox="0 0 37 36">${appServer}</svg>${fit("App server", 62)}</div>
                  <div class="c1"><svg width="18" height="17" viewBox="0 0 36 36" preserveAspectRatio="none">${windows}</svg>${fit("IIS", 13.500)}</div>
                  <div>${fit(n, nw)}</div><div>${fit("Rehost", 39.500)}</div><div>${fit(o, ow)}</div></div>`)}
              </div>
              <div class="vthumb"></div>
            </div>
            <div class="hthumb"></div>
          </section>
        </div>
      </main>
      <footer>${fit("Copyright © 2024 – UnifyCloud LLC", 205)}</footer>
    </div>`;
  }
}
